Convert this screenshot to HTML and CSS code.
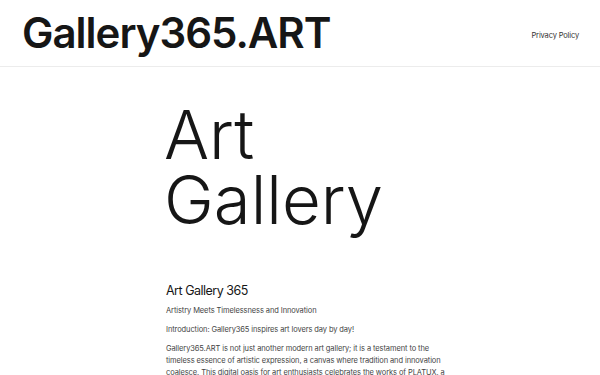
FILE: index.html
```html
<!DOCTYPE html>
<html lang="en">
<head>
<meta charset="utf-8">
<title>Gallery365.ART</title>
<link rel="stylesheet" href="styles.css">
</head>
<body>
<header class="site-header">
  <a class="logo" href="#">Gallery365.ART</a>
  <nav class="nav"><a href="#">Privacy Policy</a></nav>
</header>
<main class="content">
  <h1 class="hero"><span class="hero-line">Art</span><span class="hero-line">Gallery</span></h1>
  <h2 class="title">Art Gallery 365</h2>
  <p class="text">Artistry Meets Timelessness and Innovation</p>
  <p class="text">Introduction: Gallery365 inspires art lovers day by day!</p>
  <p class="text">Gallery365.ART is not just another modern art gallery; it is a testament to the timeless essence of artistic expression, a canvas where tradition and innovation coalesce. This digital oasis for art enthusiasts celebrates the works of PLATUX, a visionary artist whose creations bridge past and future.</p>
</main>
</body>
</html>
```

FILE: styles.css
```css
* { box-sizing: border-box; }
html, body { margin: 0; padding: 0; background: #fff; }
body {
  font-family: Inter, "Noto Sans", sans-serif;
  color: #161616;
  height: 375px;
  overflow: hidden;
}
a { color: inherit; text-decoration: none; }
.site-header {
  height: 67px;
  padding: 0 21px 0 22px;
  display: flex;
  align-items: center;
  justify-content: space-between;
  border-bottom: 1px solid #ececec;
}
.logo {
  font-size: 42px;
  font-weight: 600;
  letter-spacing: -1px;
  line-height: 1;
}
.nav {
  margin-top: -3px;
}
.nav a {
  font-size: 7.5px;
  color: #333;
  letter-spacing: -0.15px;
}
.content {
  padding-left: 166px;
  width: 448px;
}
.hero {
  margin: 35px 0 0 -2px;
  font-size: 67px;
  line-height: 65px;
  font-weight: 300;
  letter-spacing: 0;
}
.hero-line {
  display: block;
  height: 65px;
}
.title {
  margin: 51px 0 6px;
  font-size: 12.5px;
  line-height: 16px;
  font-weight: 400;
  letter-spacing: -0.5px;
}
.text {
  margin: 0 0 7px;
  font-size: 7.5px;
  line-height: 12px;
  color: #444;
  letter-spacing: -0.1px;
}
```
